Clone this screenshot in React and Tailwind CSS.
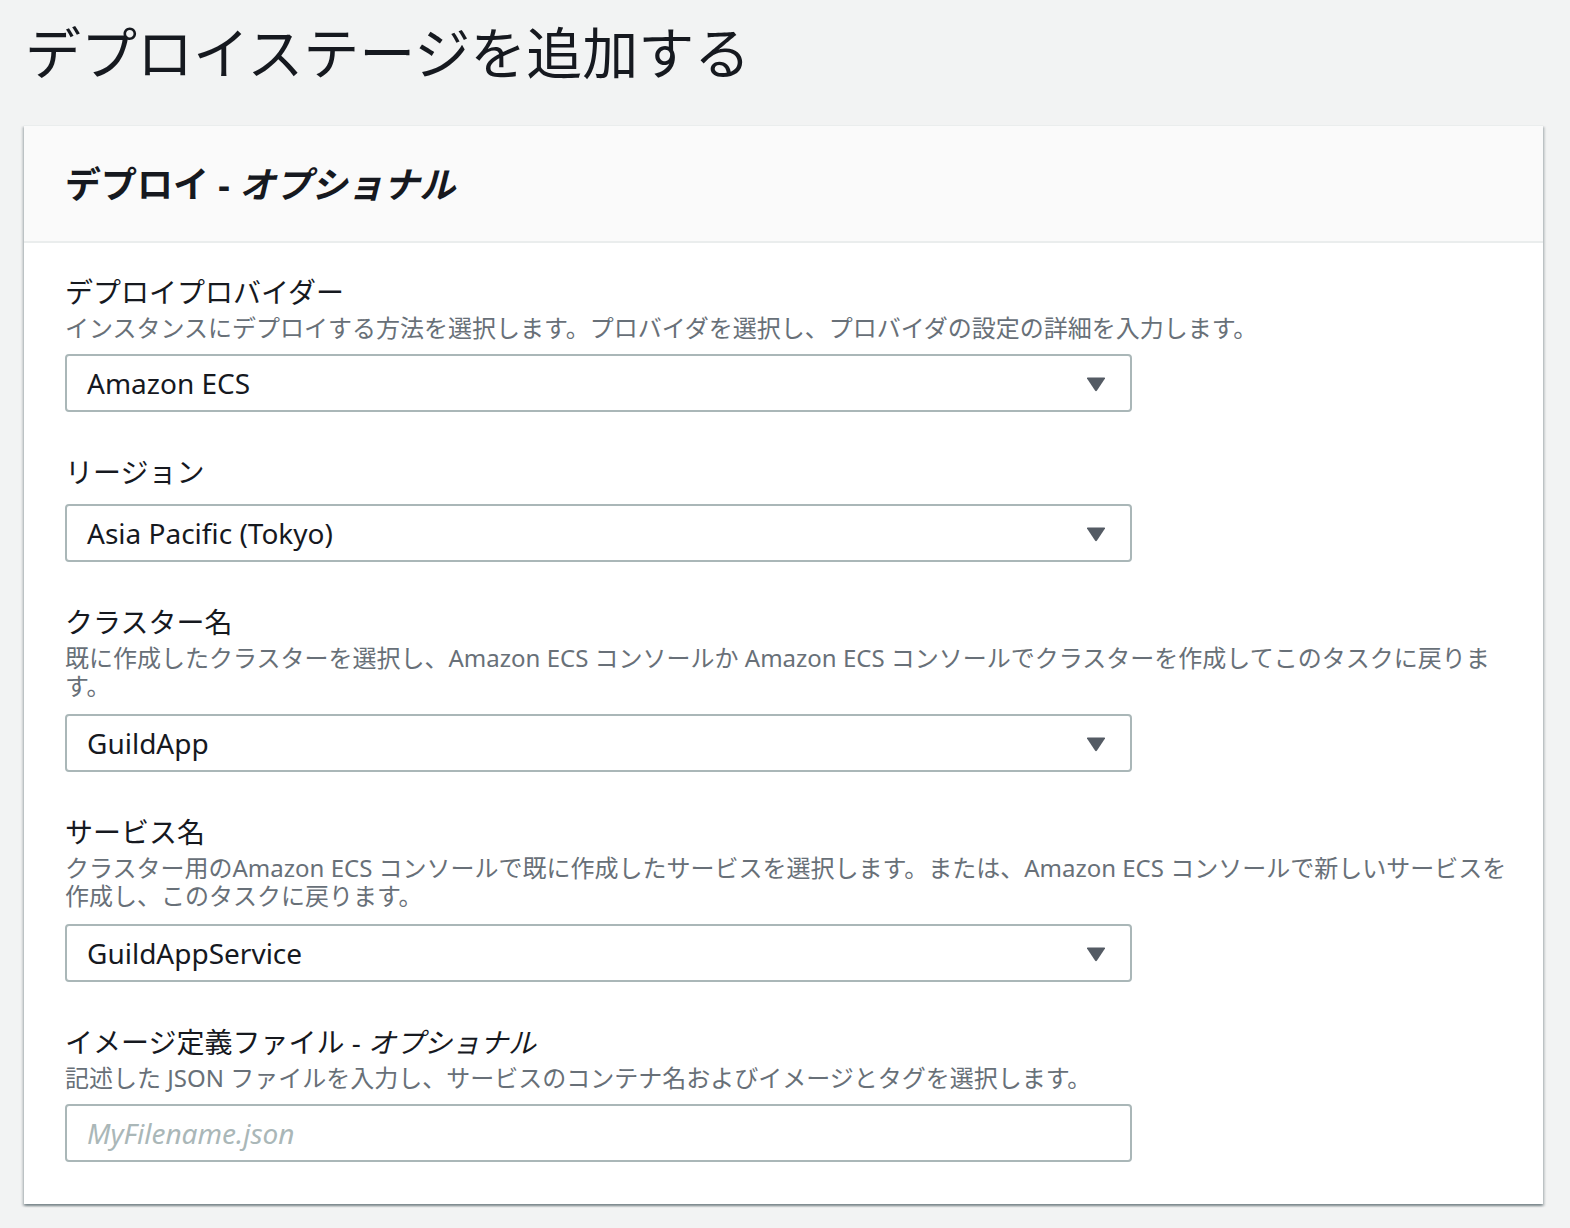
import React from "react";

const font = { fontFamily: '"Noto Sans", "Noto Sans CJK JP", sans-serif' };

function Arrow() {
  return (
    <svg width="20" height="15" viewBox="0 0 20 15" className="absolute right-[24px] top-[21px]">
      <path d="M1 1.5 Q0.5 0.5 2 0.5 L18 0.5 Q19.5 0.5 19 1.5 L11 13.5 Q10 15 9 13.5 Z" fill="#545b64" />
    </svg>
  );
}

function Select({ value, mt = "mt-[12px]" }) {
  return (
    <div className={`relative ${mt} w-[1067px] h-[58px] border-2 border-[#aab7b8] rounded-[4px] bg-white flex items-center pl-[20px] text-[28px] text-[#16191f]`}>
      <span className="leading-[54px]">{value}</span>
      <Arrow />
    </div>
  );
}

function Label({ children }) {
  return <div className="text-[28px] leading-[40px] text-[#16191f]">{children}</div>;
}

function Desc({ children }) {
  return <div className="mt-[2px] text-[24px] leading-[28px] text-[#687078] whitespace-nowrap">{children}</div>;
}

export default function App() {
  return (
    <div className="min-h-[1228px] bg-[#f2f3f3] pt-[20px] pb-[24px]" style={font}>
      <h1 className="pl-[25px] text-[56px] leading-[64px] text-[#16191f] font-normal">
        デプロイステージを追加する
      </h1>
      <div className="mt-[41px] ml-[24px] w-[1519px] bg-white border-t border-[#eaeded] shadow-[0_2px_2px_0_rgba(0,28,36,0.3),2px_2px_2px_0_rgba(0,28,36,0.15),-2px_2px_2px_0_rgba(0,28,36,0.15)]">
        <div className="bg-[#fafafa] border-b-2 border-[#eaeded] h-[117px] pl-[41px] pt-[35px]">
          <h2 className="text-[36px] leading-[48px] font-bold text-[#16191f]">
            デプロイ - <i>オプショナル</i>
          </h2>
        </div>
        <div className="pl-[41px] pr-[41px] pt-[29px] pb-[42px] flex flex-col gap-[40px]">
          <div>
            <Label>デプロイプロバイダー</Label>
            <Desc>インスタンスにデプロイする方法を選択します。プロバイダを選択し、プロバイダの設定の詳細を入力します。</Desc>
            <Select value="Amazon ECS" />
          </div>
          <div>
            <Label>リージョン</Label>
            <Select value="Asia Pacific (Tokyo)" />
          </div>
          <div>
            <Label>クラスター名</Label>
            <Desc>
              既に作成したクラスターを選択し、Amazon ECS コンソールか Amazon ECS コンソールでクラスターを作成してこのタスクに戻りま
              <br />す。
            </Desc>
            <Select value="GuildApp" mt="mt-[14px]" />
          </div>
          <div>
            <Label>サービス名</Label>
            <Desc>
              クラスター用のAmazon ECS コンソールで既に作成したサービスを選択します。または、Amazon ECS コンソールで新しいサービスを
              <br />作成し、このタスクに戻ります。
            </Desc>
            <Select value="GuildAppService" mt="mt-[14px]" />
          </div>
          <div>
            <Label>
              イメージ定義ファイル - <i>オプショナル</i>
            </Label>
            <Desc>記述した JSON ファイルを入力し、サービスのコンテナ名およびイメージとタグを選択します。</Desc>
            <div className="mt-[12px] w-[1067px] h-[58px] border-2 border-[#aab7b8] rounded-[4px] bg-white flex items-center pl-[20px] text-[28px]">
              <span className="italic text-[#aab7b8] leading-[54px]">MyFilename.json</span>
            </div>
          </div>
        </div>
      </div>
    </div>
  );
}
